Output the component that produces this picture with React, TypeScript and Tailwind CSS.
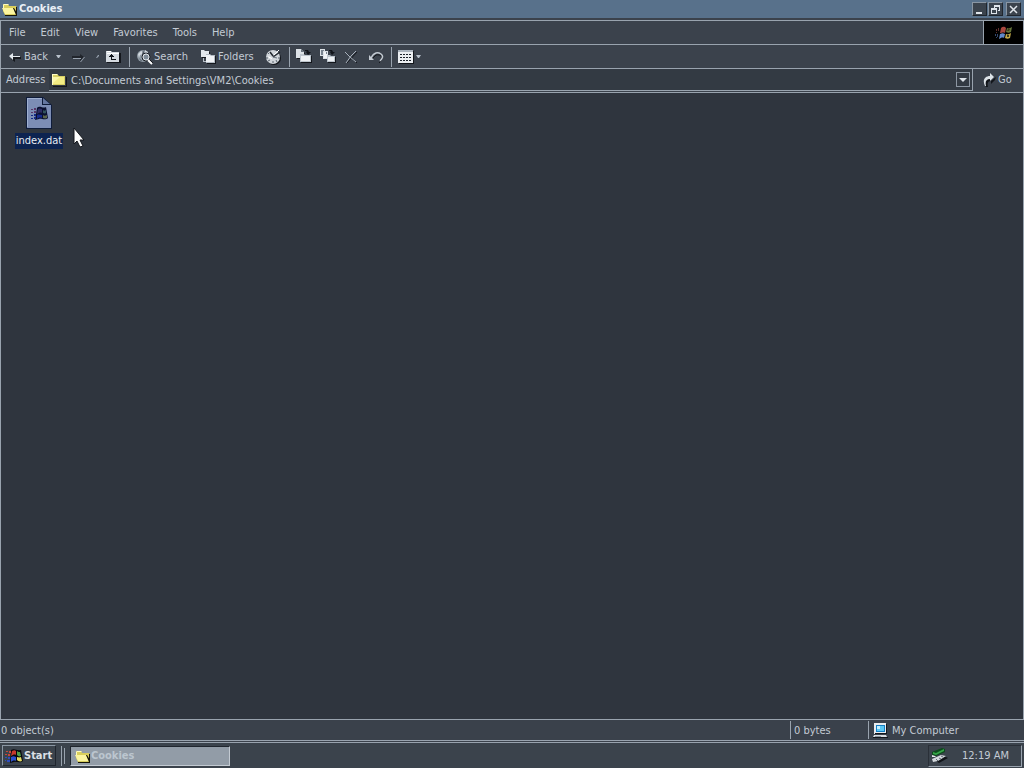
import React, { useState } from 'react';

const menus = ['File', 'Edit', 'View', 'Favorites', 'Tools', 'Help'];

function FolderIcon() {
  return (
    <svg width="16" height="16" viewBox="0 0 16 16" aria-hidden="true">
      <path d="M2 14h13V5l1 0v10H2z" fill="#14171c" />
      <path d="M1 2h5l2 2h6v9H1z" fill="#d8d064" />
      <path d="M1 2h5l1 1H2v10H1z" fill="#fffcc4" />
      <path d="M2 5h11v7H2z" fill="#f2ec84" />
      <path d="M2 5h7l-7 6z" fill="#faf6a8" />
    </svg>
  );
}

function OpenFolderIcon() {
  return (
    <svg width="16" height="16" viewBox="0 0 16 16" aria-hidden="true">
      <path d="M1 3h5l1 2h7l1 2v7H3L1 10z" fill="#d9cf5c" />
      <path d="M2 3h4l1 1H2v3H1V4z" fill="#fffbc0" />
      <path d="M0 7h11l3 6H3z" fill="#fbf5a0" />
      <path d="M11 7h1l3 5v3H3v-1h11z" fill="#14130a" />
      <path d="M14 6h1v8h-1z" fill="#14130a" />
    </svg>
  );
}

function WindowsFlag() {
  return (
    <svg width="18" height="16" viewBox="0 0 18 16" aria-hidden="true">
      <path d="M6 2c4-2 5 1 10 0l2 11c-4 3-6 0-9 1l-4 1z" fill="#05070c" />
      <path d="M7 3c2-1 3-1 4 0v4c-2-1-3 0-5 1z" fill="#c63a2c" />
      <path d="M12 3c1 1 2 1 3 1l1 4c-2 1-3 0-4-1z" fill="#4d9c48" />
      <path d="M6 9c2-1 3-1 5 0v4c-2-1-4 0-5 1z" fill="#2b50cc" />
      <path d="M12 9c1 0 2 1 4 0l1 4c-2 1-4 0-5-1z" fill="#e2da62" />
      <path d="M1 3h2v1H1zM4 3h2v2H4zM0 6h2v1H0zM3 6h2v2H3z" fill="#c8473a" />
      <path d="M0 9h2v1H0zM3 9h2v2H3zM0 12h1v1H0zM2 12h3v2H2z" fill="#2d4cc0" />
    </svg>
  );
}

function BrowserLogo() {
  return (
    <svg width="18" height="16" viewBox="0 0 18 16" aria-hidden="true">
      <path d="M6 3c2-2 4-1 5 0l-1 5c-2-1-3 0-5 0z" fill="#a8473e" />
      <path d="M12 3c2 1 3 0 5-1l-1 5c-2 1-3 1-5 0z" fill="#66763a" />
      <path d="M5 9c2-1 3-1 5 0l-1 4c-2-1-3 0-5 1z" fill="#6289ca" />
      <path d="M11 9c2 1 3 0 5-1l-1 5c-2 1-3 1-5 0z" fill="#c2a745" />
      <path d="M13 4l2 0-1 2-2 0zM12 10l2 0 0 2-2 0z" fill="#393a18" />
      <path d="M1 4h1v2H1zM3 3h1v3H3zM1 7h1v1H1z" fill="#61302e" />
      <path d="M0 9h1v2H0zM2 9h1v3H2zM1 12h1v1H1z" fill="#34496f" />
    </svg>
  );
}

function FileIcon() {
  return (
    <svg width="32" height="32" viewBox="0 0 32 32" aria-hidden="true">
      <path d="M3 0h17l9 8v24H3z" fill="#0f1c3a" />
      <path d="M4 1h15v7h9v23H4z" fill="#7c8db5" />
      <path d="M4 1h15v1H5v28H4z" fill="#9fb0d0" />
      <path d="M20 1l7 6h-7z" fill="#6577a0" />
      <path d="M14 11c3-3 6 1 9-1l2 11c-3 3-7 0-9 1l-4 1z" fill="#0a1030" />
      <path d="M15 12c2-1 3 0 4 0v4c-2-1-3 0-5 1z" fill="#2c2c62" />
      <path d="M20 13c1 1 2 1 3 0v3c-1 1-2 0-3 0z" fill="#31525c" />
      <path d="M14 18c2-1 3 0 5 0v3c-2-1-4 0-5 1z" fill="#162a8c" />
      <path d="M20 18c1 1 2 1 4 0v3c-2 1-3 0-4 0z" fill="#59644a" />
      <path d="M8 12h2v1H8zM11 11h2v2h-2zM8 15h2v1H8zM11 14h2v2h-2z" fill="#573668" />
      <path d="M8 18h2v1H8zM11 17h2v2h-2zM8 21h2v1H8zM11 20h2v2h-2z" fill="#132a86" />
    </svg>
  );
}

function BackIcon() {
  return (
    <svg width="13" height="12" viewBox="0 0 13 12" aria-hidden="true">
      <path d="M2 6h10v2H6v3L2 8z" fill="#15181d" />
      <path d="M0 5l4-3v3h7v1H4v3z" fill="#e4e9ee" />
    </svg>
  );
}

function ForwardIcon() {
  return (
    <svg width="14" height="12" viewBox="0 0 14 12" aria-hidden="true">
      <path d="M0 5h8V3l4 3-4 4V7H0z" fill="#20242b" />
      <path d="M1 7h8v1H1zM12 6h1l-4 5H8z" fill="#98a2af" />
    </svg>
  );
}

function UpIcon() {
  return (
    <svg width="16" height="16" viewBox="0 0 16 16" aria-hidden="true">
      <path d="M2 3h6v1h8v10H2z" fill="#14171c" />
      <path d="M1 2h5l1 1h7v10H1z" fill="#d5dae0" />
      <path d="M2 2h4v1H2zM2 4h12v1H2z" fill="#fff" />
      <path d="M6 5h1v1h1v1h1v1H7v2h4v1H6V8H4V7h1V6h1z" fill="#11151a" />
    </svg>
  );
}

function SearchIcon() {
  return (
    <svg width="16" height="16" viewBox="0 0 16 16" aria-hidden="true">
      <circle cx="6" cy="7" r="6" fill="#8f9aa4" />
      <path d="M1 5l3-3 3 1-1 2-3 1-1 3zM8 1l3 2-1 2-2-1z" fill="#d2d9df" />
      <path d="M2 9l3 3-1 0zM6 1l1 3-2 2z" fill="#39424d" />
      <circle cx="9" cy="8" r="4" fill="#6d7882" stroke="#191d24" />
      <circle cx="9" cy="8" r="3" fill="#7d8a96" stroke="#e2e7eb" />
      <path d="M11 11l4 4" stroke="#fff" strokeWidth="2" />
      <path d="M13 11l3 3" stroke="#15181d" />
    </svg>
  );
}

function FoldersIcon() {
  return (
    <svg width="16" height="16" viewBox="0 0 16 16" aria-hidden="true">
      <path d="M1 2h4l1 1h3v6H1z" fill="#15181d" />
      <path d="M0 1h3l1 1h4v6H0z" fill="#e3e8ed" />
      <path d="M2 9h1v3h2v1H2z" fill="#b5bdc6" />
      <path d="M6 7h9v8H6z" fill="#15181d" />
      <path d="M5 5h4l1 1h4v8H5z" fill="#b2bac3" />
      <path d="M5 6h4l1 1h3v6H5z" fill="#f0f3f6" />
    </svg>
  );
}

function HistoryIcon() {
  return (
    <svg width="17" height="16" viewBox="0 0 17 16" aria-hidden="true">
      <circle cx="9" cy="9" r="7" fill="#12151a" />
      <circle cx="8" cy="8" r="7" fill="#d0d5da" />
      <path d="M3 4l1 1M1 9h2M8 14v-2M3 12l2-1M12 13l-1-2M13 9h2" stroke="#59636d" />
      <path d="M5 3l3 4M8 8l7-5" stroke="#22272e" strokeWidth="1.5" />
      <path d="M8 8l4 1" stroke="#69737e" />
      <path d="M9 6l5-5" stroke="#fff" />
      <path d="M3 7l4 2v1L4 9z" fill="#fff" />
    </svg>
  );
}

function MoveToIcon() {
  return (
    <svg width="16" height="16" viewBox="0 0 16 16" aria-hidden="true">
      <path d="M1 1h5l3 3v6H1z" fill="#14171c" />
      <path d="M0 0h5l3 3v6H0z" fill="#dce1e6" />
      <path d="M5 0v3h3z" fill="#69737e" />
      <path d="M9 1h3l1 2h2l-3 3-2-3h1l-1-1H9z" fill="#11141a" />
      <path d="M5 7h11v7H5z" fill="#14171c" />
      <path d="M4 5h4l1 1h6v7H4z" fill="#bdc5cd" />
      <path d="M5 7h9v5H5z" fill="#eef1f4" />
    </svg>
  );
}

function CopyToIcon() {
  return (
    <svg width="16" height="16" viewBox="0 0 16 16" aria-hidden="true">
      <path d="M0 0h5v2h3v8H3V7H0z" fill="#dce1e6" />
      <path d="M1 1h3v1H3v4H1zM4 3h3v6H4z" fill="#78838f" />
      <path d="M4 3h2v2h1v4H4z" fill="#f0f3f6" />
      <path d="M9 1h3l1 2h2l-3 3-2-3h1l-1-1H9z" fill="#11141a" />
      <path d="M8 8h8v6H8z" fill="#14171c" />
      <path d="M7 6h3l1 1h4v6H7z" fill="#bdc5cd" />
      <path d="M8 8h6v4H8z" fill="#eef1f4" />
    </svg>
  );
}

function DeleteIcon() {
  return (
    <svg width="14" height="14" viewBox="0 0 14 14" aria-hidden="true">
      <path d="M2 3l11 10M13 2L3 13" stroke="#15181d" />
      <path d="M1 2l5 5 6 5M12 1L7 6l-5 7" stroke="#a9b2bd" fill="none" />
    </svg>
  );
}

function UndoIcon() {
  return (
    <svg width="16" height="14" viewBox="0 0 16 14" aria-hidden="true">
      <path d="M5 8l3-3c5-1 7 2 5 6l-2 2" stroke="#14171c" fill="none" />
      <path d="M3 8c3-6 7-6 10-4s1 5-1 7" stroke="#c3cad2" strokeWidth="1.5" fill="none" />
      <path d="M1 5v5h5z" fill="#c3cad2" />
    </svg>
  );
}

function ViewsIcon() {
  return (
    <svg width="16" height="14" viewBox="0 0 16 14" aria-hidden="true">
      <path d="M1 1h15v13H1z" fill="#14171c" />
      <path d="M0 0h15v13H0z" fill="#eceff2" />
      <path d="M0 0h15v2H0z" fill="#aab3bd" />
      <path d="M2 4h2v1H2zM5 4h2v1H5zM8 4h2v1H8zM11 4h2v1h-2zM2 7h2v1H2zM5 7h2v1H5zM8 7h2v1H8zM11 7h2v1h-2zM2 10h2v1H2zM5 10h2v1H5zM8 10h2v1H8zM11 10h2v1h-2z" fill="#1d232b" />
    </svg>
  );
}

function GoIcon() {
  return (
    <svg width="13" height="14" viewBox="0 0 13 14" aria-hidden="true">
      <path d="M3 14C1 9 3 5 8 5v3l5-4-1 3-4 4V8C5 8 4 10 5 14z" fill="#12151a" />
      <path d="M2 13C-1 7 2 3 7 3V0l4 4-4 4V6C3 6 2 9 3 13z" fill="#dde3e8" />
    </svg>
  );
}

function ComputerIcon() {
  return (
    <svg width="16" height="16" viewBox="0 0 16 16" aria-hidden="true">
      <path d="M1 0h12v11H1z" fill="#e9ecef" />
      <path d="M13 1h1v10H2v-1h11z" fill="#14171c" />
      <path d="M3 2h9v7H3z" fill="#147fc6" />
      <path d="M4 3h7v5H4z" fill="#5cc8f4" />
      <path d="M4 3h3v3H4z" fill="#c6f0ff" />
      <path d="M1 12h12l1 2H0z" fill="#d9dde1" />
      <path d="M2 13h6v1H2z" fill="#8a939c" />
      <path d="M0 14h15v1H0z" fill="#14171c" />
    </svg>
  );
}

function TrayIcon() {
  return (
    <svg width="17" height="17" viewBox="0 0 17 17" aria-hidden="true">
      <path d="M4 13l9-4 4 2-9 5z" fill="#111419" />
      <path d="M1 12l9-4 5 1-8 5-5 1z" fill="#d3d8dc" />
      <path d="M5 12l2 2M8 11l2 1M10 9l2 1" stroke="#5f6973" />
      <path d="M1 5L11 1l3 1v3L5 9 1 8z" fill="#0d4a1c" />
      <path d="M2 5l3 1 8-4v2L5 8 2 7z" fill="#35a447" />
      <path d="M1 8l3 1 1 1-4 0z" fill="#e6eaed" />
    </svg>
  );
}

function Caret() {
  return (
    <svg width="5" height="3" viewBox="0 0 5 3" aria-hidden="true">
      <path d="M0 0h5L3 3H2z" fill="#b9c2cc" />
    </svg>
  );
}

function Divider() {
  return <div className="h-5 w-px bg-[#99a3ae]" />;
}

function Cursor() {
  return (
    <svg className="pointer-events-none absolute left-[73px] top-[127px]" width="14" height="22" viewBox="0 0 14 22" aria-hidden="true">
      <path d="M1 1v16l3-3 3 6 3-1-3-6h4z" fill="#fff" stroke="#14171c" />
    </svg>
  );
}

function TitleBar() {
  const box = 'flex h-[14px] w-[15px] items-center justify-center border border-[#20262e] border-t-[#8a96a3] border-l-[#8a96a3] bg-[#3b434d]';
  return (
    <header className="flex h-[18px] items-center bg-[#58718b] pl-[2px] pr-[3px] text-[#e9eff6]">
      <OpenFolderIcon />
      <h1 className="flex-1 pl-px font-bold">Cookies</h1>
      <button aria-label="Minimize" className={box}>
        <svg width="9" height="9" viewBox="0 0 9 9"><path d="M1 7h6v2H1z" fill="#dfe4ea" /></svg>
      </button>
      <button aria-label="Restore" className={`${box} ml-px`}>
        <svg width="9" height="9" viewBox="0 0 9 9">
          <path d="M3 0h6v6H7V5h1V2H4v1H3zM0 3h6v6H0zM1 5v3h4V5z" fill="#dfe4ea" fillRule="evenodd" />
        </svg>
      </button>
      <button aria-label="Close" className={`${box} ml-[3px]`}>
        <svg width="9" height="9" viewBox="0 0 9 9"><path d="M1 1l7 7M8 1L1 8" stroke="#dfe4ea" strokeWidth="1.5" /></svg>
      </button>
    </header>
  );
}

function Toolbar() {
  return (
    <div className="flex h-6 items-center border-b border-[#99a3ae] pl-2">
      <button className="flex w-[43px] items-center gap-[2px]"><BackIcon />Back</button>
      <button aria-label="Back history" className="flex h-5 w-[17px] items-center pl-1"><Caret /></button>
      <button aria-label="Forward" className="flex h-5 w-[23px] items-center pl-[3px]"><ForwardIcon /></button>
      <button aria-label="Forward history" className="flex h-5 w-[13px] items-center pl-[3px]">
        <svg width="5" height="3" viewBox="0 0 5 3"><path d="M1 3h1l2-2V0H3z" fill="#98a2af" /></svg>
      </button>
      <button aria-label="Up" className="flex w-6 items-center"><UpIcon /></button>
      <Divider />
      <button className="ml-[7px] flex w-16 items-center gap-px"><SearchIcon />Search</button>
      <button className="flex w-16 items-center gap-px"><FoldersIcon />Folders</button>
      <button aria-label="History" className="mr-[7px]"><HistoryIcon /></button>
      <Divider />
      <button aria-label="Move To" className="w-6 pl-[6px]"><MoveToIcon /></button>
      <button aria-label="Copy To" className="w-6 pl-[6px]"><CopyToIcon /></button>
      <button aria-label="Delete" className="w-6 pl-[6px]"><DeleteIcon /></button>
      <button aria-label="Undo" className="mr-[5px] w-6 pl-[6px]"><UndoIcon /></button>
      <Divider />
      <button aria-label="Views" className="ml-[6px] flex items-center gap-[2px]"><ViewsIcon /><Caret /></button>
    </div>
  );
}

function AddressBar() {
  const [path, setPath] = useState('C:\\Documents and Settings\\VM2\\Cookies');
  return (
    <div className="flex h-[22px] bg-[#3a414b]">
      <label htmlFor="address" className="flex w-12 items-center pl-[5px]">Address</label>
      <div className="flex flex-1 items-center border-r border-b border-[#99a3ae] bg-[#333a43] pl-[2px] pr-[2px]">
        <FolderIcon />
        <input
          id="address"
          value={path}
          onChange={e => setPath(e.target.value)}
          className="h-full min-w-0 flex-1 bg-transparent pl-1 pt-[2px] outline-none"
        />
        <button aria-label="Show addresses" className="flex h-[15px] w-[14px] items-center justify-center border border-[#8d97a3]">
          <svg width="8" height="4" viewBox="0 0 8 4"><path d="M0 0h8L4 4z" fill="#dfe4ea" /></svg>
        </button>
      </div>
      <button className="flex w-[50px] items-center gap-[2px] pl-[10px]"><GoIcon />Go</button>
    </div>
  );
}

function StatusBar() {
  return (
    <footer className="flex h-[22px] items-center border-t border-b border-[#99a3ae] bg-[#3a414b]">
      <span className="flex-1 pl-px pt-[2px]">0 object(s)</span>
      <span className="flex h-[18px] w-[78px] items-center border-l border-[#99a3ae] pl-[3px] pt-[2px]">0 bytes</span>
      <span className="flex h-[18px] w-[156px] items-center gap-[3px] border-l border-[#99a3ae] pl-1 pt-[2px]"><ComputerIcon />My Computer</span>
    </footer>
  );
}

function Taskbar() {
  return (
    <nav className="mt-px flex h-[26px] items-center border-t border-[#99a3ae] bg-[#3b434c] pl-[2px] pr-[2px]">
      <button className="flex h-[21px] w-[54px] items-center gap-px border border-[#20262e] border-t-[#8a96a3] border-l-[#8a96a3] pl-[2px] font-bold text-[#dbe0e6]">
        <WindowsFlag />Start
      </button>
      <div className="ml-[5px] h-5 w-px bg-[#99a3ae]" />
      <div className="ml-[2px] h-4 w-px bg-[#99a3ae]" />
      <button className="ml-[5px] flex h-5 w-[160px] items-center border border-[#20262e] border-b-[#c3cad2] border-r-[#c3cad2] bg-[#929ca7] pl-1 font-bold text-[#bcc6cf]">
        <OpenFolderIcon />Cookies
      </button>
      <div className="ml-auto flex h-[22px] w-[94px] items-center justify-between border border-[#2a3038] border-b-[#99a3ae] border-r-[#99a3ae] pl-[2px] pr-3">
        <TrayIcon />
        <time>12:19 AM</time>
      </div>
    </nav>
  );
}

export default function App() {
  return (
    <div className="relative flex h-screen flex-col overflow-hidden bg-[#3b424c] font-['DejaVu_Sans_Condensed','DejaVu_Sans',sans-serif] text-[11px] leading-4 text-[#c3cbd4]">
      <TitleBar />
      <div className="mt-[2px] flex flex-1 flex-col border-l border-r border-t border-[#99a3ae]">
        <div className="flex h-6 border-b border-[#99a3ae]">
          <nav className="flex flex-1 items-center pl-px">
            {menus.map(m => (
              <button key={m} className="pl-[7px] pr-2">{m}</button>
            ))}
          </nav>
          <div className="flex w-10 items-center justify-center border-l border-[#99a3ae] bg-black">
            <BrowserLogo />
          </div>
        </div>
        <Toolbar />
        <AddressBar />
        <main className="mt-px flex-1 border-t border-[#99a3ae] bg-[#2f353e] pl-[12px] pt-1">
          <button className="flex w-[52px] flex-col items-center gap-1 text-[#e6ebf2]">
            <FileIcon />
            <span className="h-4 bg-[#0d2350] px-px">index.dat</span>
          </button>
        </main>
      </div>
      <StatusBar />
      <Taskbar />
      <Cursor />
    </div>
  );
}
